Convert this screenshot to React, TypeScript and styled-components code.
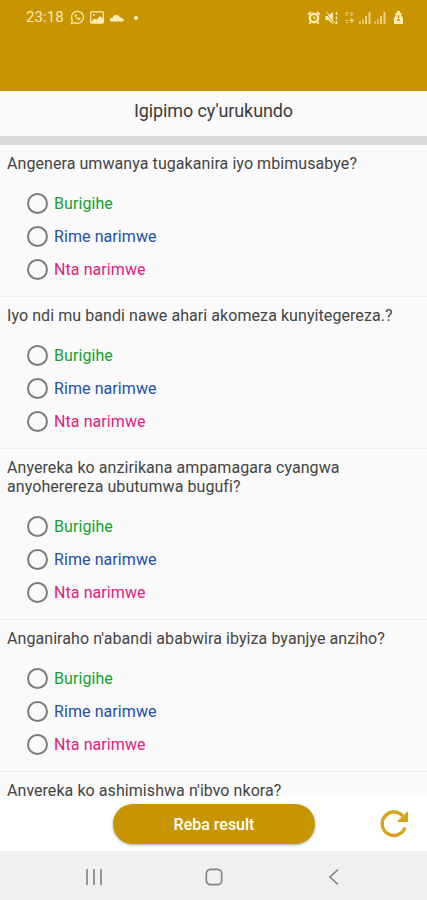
import React from "react";
import styled, { createGlobalStyle } from "styled-components";

const GOLD = "#c89500";

const GlobalStyle = createGlobalStyle`
  * { box-sizing: border-box; }
  body { margin: 0; background: #fff; font-family: Roboto, "Liberation Sans", sans-serif; }
`;

const Screen = styled.main`
  display: flex;
  flex-direction: column;
  width: 427px;
  height: 900px;
  overflow: hidden;
  background: #fff;
`;

const AppBar = styled.header`
  flex: none;
  height: 91px;
  background: ${GOLD};
`;

const StatusBar = styled.div`
  display: flex;
  justify-content: space-between;
  height: 35px;
  padding: 0 24px 0 26px;
  color: #ffebb8;
`;

const StatusGroup = styled.div`
  display: flex;
  align-items: center;
  svg { display: block; }
`;

const StatusItem = styled.span<{ $before: number }>`
  margin-left: ${(p) => p.$before}px;
`;

const Clock = styled.span`
  width: 38px;
  font-size: 15px;
  line-height: 35px;
  white-space: nowrap;
  letter-spacing: 0.1px;
`;

const Title = styled.h1`
  flex: none;
  height: 45px;
  margin: 0;
  background: #fafafa;
  color: #3a3a3a;
  font-size: 18px;
  font-weight: 400;
  line-height: 39px;
  letter-spacing: -0.1px;
  text-align: center;
`;

const Band = styled.div`
  flex: none;
  height: 9px;
  background: #dadada;
`;

const QuestionList = styled.section`
  flex: none;
  height: 651px;
  overflow: hidden;
  background: #fafafa;
`;

const Question = styled.article`
  padding: 9px 7px 10px;
  border-bottom: 1px solid #ebebeb;
`;

const Prompt = styled.p`
  margin: 0 0 14px;
  color: #444;
  font-size: 16px;
  line-height: 19px;
  white-space: pre-line;
  letter-spacing: 0.07px;
`;

const Option = styled.label<{ $color: string }>`
  display: flex;
  align-items: center;
  gap: 6px;
  height: 33px;
  padding-left: 20px;
  color: ${(p) => p.$color};
  font-size: 16px;
  letter-spacing: 0.08px;
`;

const Radio = styled.input`
  appearance: none;
  width: 21px;
  height: 21px;
  margin: 0;
  border: 2px solid #7c7c7c;
  border-radius: 50%;
`;

const ActionBar = styled.footer`
  display: grid;
  grid-template-columns: 113px 202px 1fr;
  flex: none;
  height: 55px;
  background: #fff;
`;

const ResultButton = styled.button`
  grid-column: 2;
  height: 40px;
  margin-top: 8px;
  padding: 1px 0 0;
  border: 0;
  border-radius: 20px;
  background: ${GOLD};
  box-shadow: 0 1px 3px rgba(0, 0, 0, 0.35);
  color: #fff;
  font: 500 16px/39px Roboto, sans-serif;
`;

const RefreshButton = styled.button`
  justify-self: end;
  width: 32px;
  height: 32px;
  margin: 11px 17px 0 0;
  padding: 0;
  border: 0;
  background: none;
  svg { display: block; }
`;

const NavBar = styled.nav`
  display: grid;
  grid-template-columns: 120px 120px 120px;
  justify-content: center;
  justify-items: center;
  align-items: center;
  flex: none;
  height: 49px;
  padding-top: 2px;
  background: #f0f0f0;
`;

const choices = [
  { label: "Burigihe", color: "#18a02c" },
  { label: "Rime narimwe", color: "#234fa8" },
  { label: "Nta narimwe", color: "#e0207f" },
];

const questions = [
  { text: "Angenera umwanya tugakanira iyo mbimusabye?", choices },
  { text: "Iyo ndi mu bandi nawe ahari akomeza kunyitegereza.?", choices },
  { text: "Anyereka ko anzirikana ampamagara cyangwa\nanyoherereza ubutumwa bugufi?", choices },
  { text: "Anganiraho n'abandi ababwira ibyiza byanjye anziho?", choices },
  { text: "Anyereka ko ashimishwa n'ibyo nkora?", choices: [] },
];

const ChatIcon = () => (
  <svg width="15" height="15" viewBox="0 0 16 16" fill="none" stroke="currentColor">
    <path d="M1.5 14.5 2.4 11A6.4 6.4 0 1 1 5 13.5Z" strokeWidth="1.3" />
    <path d="M5.7 4.5c-1.8 2 2.8 7 5.2 5.5l-.1-1-1.6-.8-.8.8C7.2 8.5 6.6 7.7 6.3 6.9l.7-.8-.6-1.5Z" fill="currentColor" strokeWidth=".5" />
  </svg>
);

const PictureIcon = () => (
  <svg width="14" height="13" viewBox="0 0 14 13" fill="none" stroke="currentColor">
    <rect x=".7" y=".9" width="12.6" height="11.2" rx="1" strokeWidth="1.3" />
    <path d="m1.5 10.5 3-3 1.8 1.5 3.7-4 3 3v4h-11.5Z" fill="currentColor" stroke="none" />
    <circle cx="4" cy="4" r="1" fill="currentColor" stroke="none" />
  </svg>
);

const CloudIcon = () => (
  <svg width="14" height="8" viewBox="0 0 14 8" fill="currentColor">
    <path d="M1.5 7.5a1.7 1.7 0 0 1 0-3.4h1A3.8 3.8 0 0 1 9.7 3c1 0 1.5.7 1.7 1.3 3.2.2 2.8 3.2 1.1 3.2Z" />
  </svg>
);

const DotIcon = () => (
  <svg width="4" height="4" viewBox="0 0 4 4" fill="currentColor"><circle cx="2" cy="2" r="2" /></svg>
);

const AlarmIcon = () => (
  <svg width="14" height="14" viewBox="0 0 14 14" fill="none" stroke="currentColor">
    <circle cx="7" cy="7" r="4.2" strokeWidth="2.4" />
    <path d="m1 3.5 3-2.5m6 0 3 2.5M3.5 11l-1.3 1.7M10.5 11l1.3 1.7" strokeWidth="1.8" />
    <path d="M7 4.5V7.3l2 .8" strokeWidth="1" />
  </svg>
);

const MuteIcon = () => (
  <svg width="13" height="14" viewBox="0 0 13 14" fill="none" stroke="currentColor">
    <path d="M.5 5H3l5-4v12L3 9H.5Z" fill="currentColor" stroke="none" />
    <path d="m0 1 9 12" stroke={GOLD} strokeWidth="1" />
    <path d="m1.5.8 8.5 11.7" strokeWidth="1" />
    <path d="M11.5 1v3m0 1.5v3m0 1.5v3" strokeWidth="1.5" />
  </svg>
);

const DataIcon = () => (
  <svg width="9" height="12" viewBox="0 0 9 12" fill="none" stroke="currentColor" strokeWidth="1.2">
    <path opacity=".8" d="M.5 1h3m-3 2h2M5 1h3.5M5 3h3M.5 8.5h2M4 8.5h4M6 6.5l2 2-2 2M1 10.500h2" />
  </svg>
);

const SignalIcon = () => (
  <svg width="12" height="12" viewBox="0 0 12 12" fill="currentColor">
    <path opacity=".5" d="M0 9h2v3H0zM3 7h2v5H3z" />
    <path opacity=".7" d="M6 4h2v8H6zM9.5 0h2v12h-2z" />
  </svg>
);

const BatteryIcon = () => (
  <svg width="9" height="13" viewBox="0 0 9 13">
    <path fill="currentColor" d="M3 0h3v2h1.5v3L9 7v6H0V7l1.5-2V2H3Z" />
    <path d="M4.5 4v3M3 9h3" stroke={GOLD} strokeWidth="1.3" />
  </svg>
);

const RefreshIcon = () => (
  <svg width="32" height="32" viewBox="0 0 32 32" fill="none">
    <path d="M27 20.5A11.7 11.7 0 1 1 24.7 9" stroke="#d7a51c" strokeWidth="3.4" />
    <path d="M30 4v11H18.5Z" fill="#d7a51c" />
  </svg>
);

const RecentsIcon = () => (
  <svg width="18" height="18" viewBox="0 0 18 18" stroke="#858585" strokeWidth="1.7">
    <path d="M2 1v16M9 1v16M16 1v16" />
  </svg>
);

const HomeIcon = () => (
  <svg width="18" height="18" viewBox="0 0 18 18" fill="none" stroke="#858585" strokeWidth="1.7">
    <rect x="1.3" y="1.3" width="15.4" height="15.4" rx="4.3" />
  </svg>
);

const BackIcon = () => (
  <svg width="18" height="18" viewBox="0 0 18 18" fill="none" stroke="#858585" strokeWidth="1.7">
    <path d="M13 1.5 5 9l8 7.5" />
  </svg>
);

export default function App() {
  return (
    <>
      <GlobalStyle />
      <Screen>
        <AppBar>
          <StatusBar>
            <StatusGroup>
              <Clock>23:18</Clock>
              <StatusItem $before={6}><ChatIcon /></StatusItem>
              <StatusItem $before={5}><PictureIcon /></StatusItem>
              <StatusItem $before={6}><CloudIcon /></StatusItem>
              <StatusItem $before={10}><DotIcon /></StatusItem>
            </StatusGroup>
            <StatusGroup>
              <AlarmIcon />
              <StatusItem $before={4}><MuteIcon /></StatusItem>
              <StatusItem $before={7}><DataIcon /></StatusItem>
              <StatusItem $before={5}><SignalIcon /></StatusItem>
              <StatusItem $before={3}><SignalIcon /></StatusItem>
              <StatusItem $before={8}><BatteryIcon /></StatusItem>
            </StatusGroup>
          </StatusBar>
        </AppBar>
        <Title>Igipimo cy'urukundo</Title>
        <Band />
        <QuestionList>
          {questions.map((question, index) => (
            <Question key={index}>
              <Prompt>{question.text}</Prompt>
              {question.choices.map((choice) => (
                <Option key={choice.label} $color={choice.color}>
                  <Radio type="radio" name={`question-${index}`} />
                  {choice.label}
                </Option>
              ))}
            </Question>
          ))}
        </QuestionList>
        <ActionBar>
          <ResultButton>Reba result</ResultButton>
          <RefreshButton aria-label="Refresh"><RefreshIcon /></RefreshButton>
        </ActionBar>
        <NavBar>
          <RecentsIcon />
          <HomeIcon />
          <BackIcon />
        </NavBar>
      </Screen>
    </>
  );
}
